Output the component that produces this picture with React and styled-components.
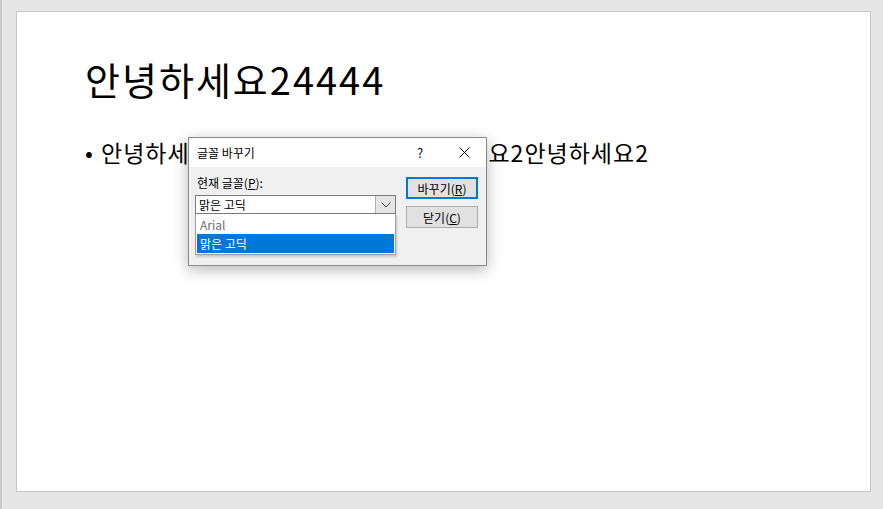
import React from 'react';
import styled, { createGlobalStyle } from 'styled-components';

const GlobalStyle = createGlobalStyle`
  html, body {
    margin: 0;
    padding: 0;
    width: 883px;
    height: 509px;
    overflow: hidden;
    background: #e6e6e6;
  }
`;

const Workspace = styled.div`
  width: 883px;
  height: 509px;
  box-sizing: border-box;
  padding: 11px 0 0 14px;
  border-left: 2px solid #c9c9c9;
  font-family: 'Noto Sans CJK KR', 'Noto Sans', sans-serif;
`;

const Slide = styled.div`
  position: relative;
  width: 855px;
  height: 481px;
  box-sizing: border-box;
  background: #fff;
  border: 1px solid #c6c6c6;
  padding: 42px 0 0 68px;
  color: #000;
`;

const Title = styled.h1`
  margin: 0;
  font-size: 38px;
  font-weight: 400;
  line-height: 50px;
  letter-spacing: 2px;
`;

const BulletList = styled.ul`
  list-style: none;
  margin: 33px 0 0;
  padding: 0;
`;

const Bullet = styled.li`
  display: flex;
  align-items: baseline;
  font-size: 23px;
  line-height: 30px;
  letter-spacing: 1px;
  white-space: nowrap;
  &::before {
    content: '•';
    width: 16px;
    flex-shrink: 0;
  }
`;

const Dialog = styled.div`
  position: absolute;
  left: 171px;
  top: 125px;
  width: 299px;
  height: 129px;
  box-sizing: border-box;
  background: #f0f0f0;
  border: 1px solid #8a8a8a;
  box-shadow: 0 4px 14px rgba(0, 0, 0, 0.28);
  font-size: 12px;
  color: #000;
  display: flex;
  flex-direction: column;
`;

const TitleBar = styled.div`
  height: 29px;
  background: #fff;
  display: flex;
  align-items: center;
  padding-left: 8px;
`;

const DialogTitle = styled.span`
  flex: 1;
  font-size: 12px;
`;

const TitleButton = styled.span`
  width: 44px;
  height: 29px;
  display: flex;
  align-items: center;
  justify-content: center;
  font-size: 13px;
  &:first-of-type {
    margin-right: 1px;
  }
`;

const Body = styled.div`
  flex: 1;
  display: flex;
  padding: 7px 8px 0 6px;
  gap: 10px;
`;

const FieldColumn = styled.div`
  position: relative;
  width: 201px;
`;

const Label = styled.div`
  padding-left: 2px;
  height: 18px;
  line-height: 18px;
  margin-bottom: 3px;
`;

const Combo = styled.div`
  height: 19px;
  box-sizing: border-box;
  border: 1px solid #7a7a7a;
  background: #fff;
  display: flex;
  align-items: stretch;
`;

const ComboValue = styled.span`
  flex: 1;
  padding-left: 3px;
  line-height: 17px;
`;

const ComboArrow = styled.span`
  width: 19px;
  background: #e5e5e5;
  border-left: 1px solid #adadad;
  display: flex;
  align-items: center;
  justify-content: center;
`;

const DropList = styled.div`
  position: absolute;
  left: 0;
  right: 0;
  top: 40px;
  background: #fff;
  border: 1px solid #a0a0a0;
  border-top: none;
  box-shadow: 1px 2px 2px rgba(0, 0, 0, 0.18);
  padding: 1px 1px 1px;
`;

const Option = styled.div`
  height: 19px;
  line-height: 19px;
  padding-left: 3px;
  color: ${(p) => (p.$selected ? '#fff' : '#6d6d6d')};
  background: ${(p) => (p.$selected ? '#0078d7' : 'transparent')};
`;

const ButtonColumn = styled.div`
  display: flex;
  flex-direction: column;
  gap: 7px;
  padding-top: 3px;
`;

const Button = styled.div`
  width: 72px;
  height: 22px;
  box-sizing: border-box;
  background: #e1e1e1;
  border: ${(p) => (p.$default ? '2px solid #0078d7' : '1px solid #adadad')};
  display: flex;
  align-items: center;
  justify-content: center;
  u {
    text-decoration: underline;
  }
`;

function Chevron() {
  return (
    <svg width="10" height="6" viewBox="0 0 10 6">
      <path d="M0.5 0.5 L5 5 L9.5 0.5" fill="none" stroke="#444" strokeWidth="1" />
    </svg>
  );
}

function CloseIcon() {
  return (
    <svg width="11" height="11" viewBox="0 0 11 11">
      <path d="M0.5 0.5 L10.5 10.5 M10.5 0.5 L0.5 10.5" stroke="#000" strokeWidth="1" />
    </svg>
  );
}

export default function App() {
  return (
    <>
      <GlobalStyle />
      <Workspace>
        <Slide>
          <Title>안녕하세요24444</Title>
          <BulletList>
            <Bullet>안녕하세요2안녕하세요222세안녕하세요2안녕하세요2</Bullet>
          </BulletList>

          <Dialog>
            <TitleBar>
              <DialogTitle>글꼴 바꾸기</DialogTitle>
              <TitleButton>?</TitleButton>
              <TitleButton><CloseIcon /></TitleButton>
            </TitleBar>
            <Body>
              <FieldColumn>
                <Label>현재 글꼴(<u>P</u>):</Label>
                <Combo>
                  <ComboValue>맑은 고딕</ComboValue>
                  <ComboArrow><Chevron /></ComboArrow>
                </Combo>
                <DropList>
                  <Option>Arial</Option>
                  <Option $selected>맑은 고딕</Option>
                </DropList>
              </FieldColumn>
              <ButtonColumn>
                <Button $default>바꾸기(<u>R</u>)</Button>
                <Button>닫기(<u>C</u>)</Button>
              </ButtonColumn>
            </Body>
          </Dialog>
        </Slide>
      </Workspace>
    </>
  );
}
